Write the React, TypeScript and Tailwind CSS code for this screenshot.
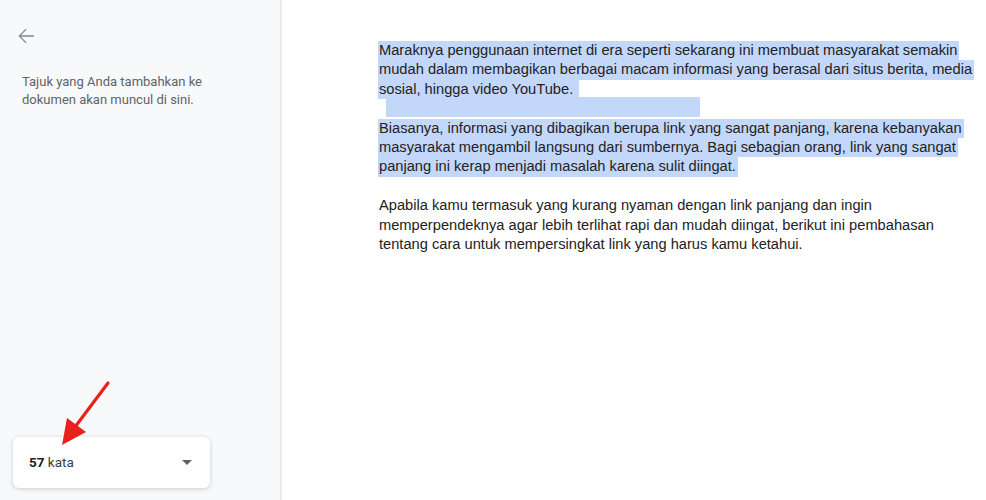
const para1 = [
  "Maraknya penggunaan internet di era seperti sekarang ini membuat masyarakat semakin",
  "mudah dalam membagikan berbagai macam informasi yang berasal dari situs berita, media",
  "sosial, hingga video YouTube.\u00a0",
];

const para2 = [
  "Biasanya, informasi yang dibagikan berupa link yang sangat panjang, karena kebanyakan",
  "masyarakat mengambil langsung dari sumbernya. Bagi sebagian orang, link yang sangat",
  "panjang ini kerap menjadi masalah karena sulit diingat.",
];

const para3 = [
  "Apabila kamu termasuk yang kurang nyaman dengan link panjang dan ingin",
  "memperpendeknya agar lebih terlihat rapi dan mudah diingat, berikut ini pembahasan",
  "tentang cara untuk mempersingkat link yang harus kamu ketahui.",
];

const Line = ({ text, selected }: { text: string; selected?: boolean }) => (
  <div className="h-[19.4px]">
    <span
      className={`inline-block h-[19.4px] pl-[1px] pr-[2px] leading-[19.4px] ${
        selected ? "bg-[#c3d7fb]" : ""
      }`}
    >
      {text}
    </span>
  </div>
);

const Sidebar = () => (
  <aside className="relative flex h-[500px] w-[282px] shrink-0 flex-col border-r-2 border-[#e8eaed] bg-[#f8f9fa] font-['Roboto',sans-serif]">
    <button type="button" className="ml-[14px] mt-[24px] h-6 w-6 text-[#80868b]">
      <svg viewBox="0 0 24 24" width="24" height="24" fill="currentColor">
        <path d="M20 11.2H6.9l5.6-5.6-.9-.9L4.5 12l7.1 7.3.9-.9-5.6-5.6H20v-1.6z" />
      </svg>
    </button>
    <p className="ml-[22px] mt-[25px] w-[210px] text-[13px] leading-[18px] text-[#5f6368]">
      Tajuk yang Anda tambahkan ke dokumen akan muncul di sini.
    </p>

    <div className="mb-[12px] ml-[13px] mt-auto flex h-[51px] w-[197px] items-center justify-between rounded-md bg-white pl-4 pr-[18px] shadow-[0_1px_4px_rgba(60,64,67,0.25)]">
      <span className="text-[13.5px] text-[#3c4043]">
        <b className="font-bold text-[#202124]">57</b> kata
      </span>
      <svg width="10" height="5" viewBox="0 0 10 5">
        <path d="M0 0h10L5 5z" fill="#5f6368" />
      </svg>
    </div>

    <svg
      className="pointer-events-none absolute left-[55px] top-[378px]"
      width="60"
      height="72"
      viewBox="0 0 60 72"
    >
      <line x1="53" y1="5" x2="20" y2="49" stroke="#e8211d" strokeWidth="3.2" strokeLinecap="round" />
      <path d="M7 67 L12 40 L31 54 Z" fill="#e8211d" />
    </svg>
  </aside>
);

export default function App() {
  return (
    <div className="flex h-[500px] w-[986px] overflow-hidden bg-white">
      <Sidebar />
      <main className="flex-1 pl-[96px] pt-[39px] font-['Liberation_Sans',Arial,sans-serif] text-[14.67px] text-[#222]">
        {para1.map((t) => (
          <Line key={t} text={t} selected />
        ))}
        <div className="h-[19.4px]">
          <span className="ml-[8px] inline-block h-[19.4px] w-[314px] bg-[#c3d7fb]" />
        </div>
        {para2.map((t) => (
          <Line key={t} text={t} selected />
        ))}
        <div className="h-[19.4px]" />
        {para3.map((t) => (
          <Line key={t} text={t} />
        ))}
      </main>
    </div>
  );
}
